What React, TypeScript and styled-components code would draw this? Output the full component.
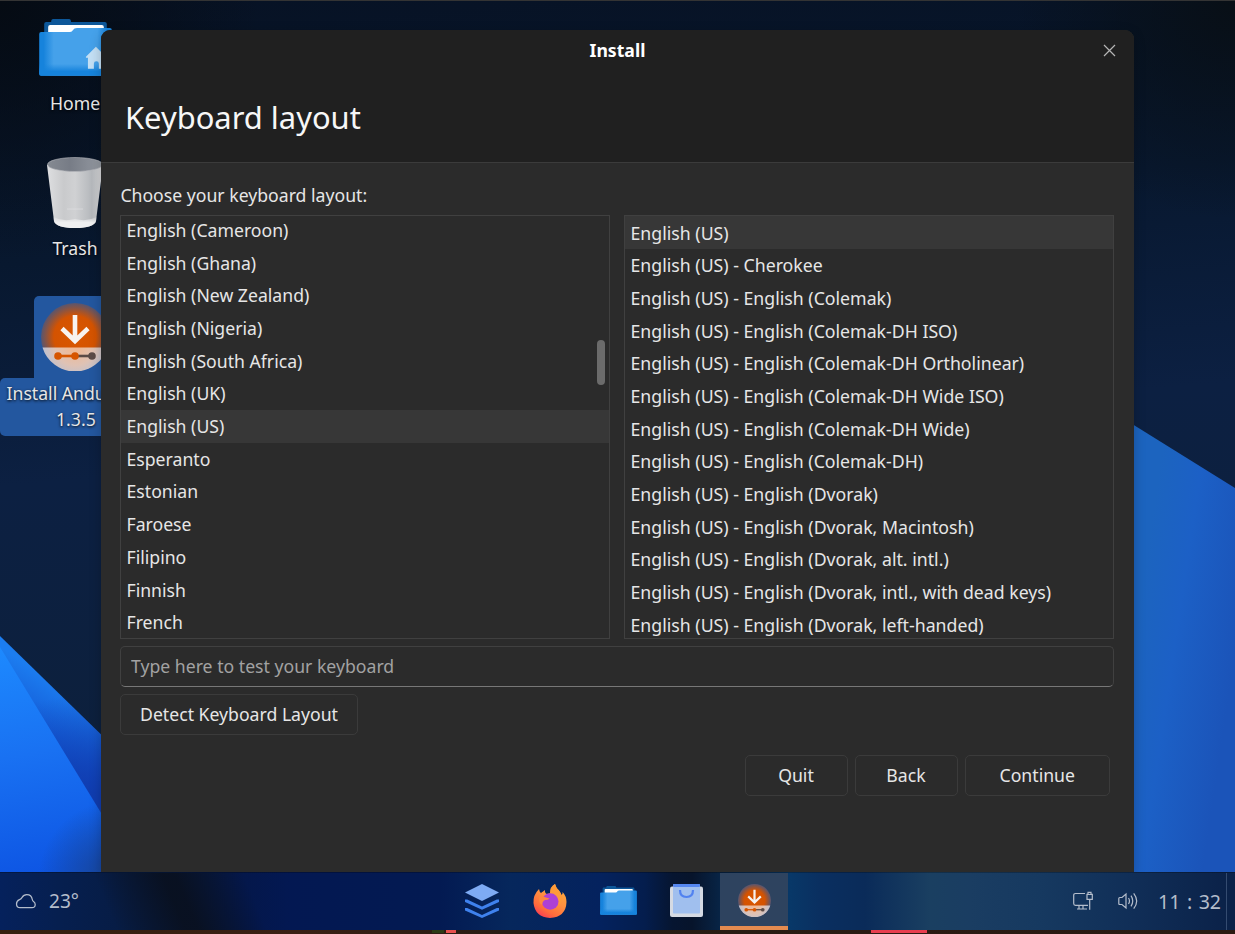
import React from "react";
import styled, { createGlobalStyle, css } from "styled-components";

const GlobalStyle = createGlobalStyle`
  * { box-sizing: border-box; }
  body { margin: 0; background: #081428; }
  body, button, input { font-family: "Noto Sans", "Open Sans", sans-serif; }
`;

const Screen = styled.div`
  display: flex;
  flex-direction: column;
  width: 1235px;
  height: 934px;
  overflow: hidden;
  font-size: 17.65px;
  color: #e6e6e6;
`;

const Desktop = styled.main`
  position: relative;
  flex: 1;
  min-height: 0;
  border-top: 1px solid #343434;
  overflow: hidden;
`;

const Wallpaper = styled.svg`
  position: absolute;
  inset: 0;
  display: block;
`;

const Shortcut = styled.div<{ $top: number }>`
  position: absolute;
  top: ${(p) => p.$top}px;
  left: 0;
  width: 150px;
  display: flex;
  flex-direction: column;
  align-items: center;
`;

const ShortcutIcon = styled.div<{ $selected?: boolean }>`
  width: 82px;
  height: 82px;
  display: flex;
  align-items: center;
  justify-content: center;
  ${(p) => p.$selected && css`
    background: #23579f;
    border-radius: 5px 5px 0 0;
  `}
`;

const ShortcutLabel = styled.div`
  padding: 2px 0 0;
  line-height: 25.5px;
  text-align: center;
  text-shadow: 0 1px 3px #000;
`;

const SelectedLabel = styled.div`
  align-self: flex-start;
  display: flex;
  flex-direction: column;
  align-items: flex-start;
  width: 104px;
  padding: 3px 0 4px;
  background: #23579f;
  border-radius: 5px 0 0 5px;
  line-height: 25.5px;
  text-shadow: 0 1px 3px #000;
  white-space: nowrap;
`;

const LabelLine = styled.span<{ $indent: number }>`
  margin-left: ${(p) => p.$indent}px;
`;

const Window = styled.section`
  position: absolute;
  left: 101px;
  top: 29px;
  width: 1033px;
  height: 843px;
  display: flex;
  flex-direction: column;
  background: #2b2b2b;
  border-radius: 9px 9px 0 0;
  border-bottom: 1px solid #141414;
  box-shadow: 0 3px 12px rgba(0, 0, 0, 0.22);
  overflow: hidden;
`;

const Header = styled.header`
  flex: none;
  height: 133px;
  background: #202020;
  border-bottom: 1px solid #3b3b3b;
`;

const TitleBar = styled.div`
  display: grid;
  grid-template-columns: 49px 1fr 49px;
  align-items: center;
  height: 41px;
`;

const Title = styled.div`
  padding-bottom: 2px;
  text-align: center;
  font-weight: 700;
  color: #fff;
`;

const CloseButton = styled.button`
  display: flex;
  justify-content: center;
  padding: 0;
  border: 0;
  background: none;
`;

const PageHeading = styled.h1`
  margin: 25px 0 0 24px;
  font-size: 30.9px;
  font-weight: 400;
  line-height: 42px;
  color: #f7f7f7;
`;

const Body = styled.div`
  display: flex;
  flex-direction: column;
  padding: 20px 20px 0 19px;
`;

const Prompt = styled.div`
  height: 32px;
  padding-left: 0.4px;
  line-height: 25px;
`;

const Lists = styled.div`
  display: grid;
  grid-template-columns: 490px 490px;
  gap: 14px;
`;

const ListBox = styled.div<{ $scrolled?: boolean }>`
  position: relative;
  height: 424px;
  border: 1px solid #404040;
  overflow: hidden;
  font-size: ${(p) => (p.$scrolled ? "17.65px" : "17.72px")};
  & > ul {
    margin-top: ${(p) => (p.$scrolled ? "-1.9px" : "0.7px")};
    box-shadow: ${(p) => (p.$scrolled ? "none" : "0 -1px #373737")};
  }
`;

const Options = styled.ul`
  list-style: none;
  margin: 0;
  padding: 0;
`;

const Option = styled.li<{ $selected?: boolean }>`
  height: 32.68px;
  padding-left: 5.5px;
  line-height: 32.68px;
  white-space: nowrap;
  background: ${(p) => (p.$selected ? "#373737" : "transparent")};
`;

const ScrollThumb = styled.div`
  position: absolute;
  top: 124px;
  right: 4.5px;
  width: 8px;
  height: 45px;
  border-radius: 4px;
  background: #6b6b6b;
`;

const TestInput = styled.input`
  height: 41px;
  margin-top: 7px;
  padding: 0 10px 2px;
  font-size: 17.65px;
  color: #e6e6e6;
  background: #2b2b2b;
  border: 1px solid #404040;
  border-bottom-color: #777;
  border-radius: 5px;
  outline: none;
  &::placeholder { color: #a2a2a2; opacity: 1; }
`;

const Button = styled.button<{ $width: number }>`
  width: ${(p) => p.$width}px;
  height: 41px;
  padding: 0 0 2px;
  font-size: 17.65px;
  line-height: 24px;
  color: #e6e6e6;
  background: #2b2b2b;
  border: 1px solid #3b3b3b;
  border-radius: 5px;
`;

const DetectRow = styled.div`
  display: flex;
  margin-top: 7px;
`;

const Actions = styled.div`
  display: flex;
  justify-content: flex-end;
  gap: 7px;
  padding: 20px 4px 0 0;
`;

const Taskbar = styled.footer`
  flex: none;
  height: 58px;
  display: grid;
  grid-template-columns: 448px 340px 1fr;
  border-top: 1px solid rgba(0, 0, 0, 0.25);
  color: #b4bdcb;
  background:
    linear-gradient(67deg, rgba(9, 16, 30, 0) 14%, rgba(9, 16, 30, 0.9) 47%, rgba(9, 16, 30, 0.9) 53%, rgba(9, 16, 30, 0) 86%) 88px 0 / 184px 100% no-repeat,
    linear-gradient(
      90deg,
      #05215c 0, #061f4f 60px, #071c44 125px, #071a40 170px,
      #04174a 240px, #031852 290px, #031a52 440px, #06275c 510px, #04225e 600px,
      #041d4d 645px, #061531 672px, #07142b 692px, #082547 722px, #083868 790px,
      #0a2f60 820px, #0a2b59 865px, #1a3f61 930px, #1a3d62 970px, #163960 1040px,
      #102e57 1135px, #0b2249 1225px
    );
`;

const Weather = styled.div`
  display: flex;
  align-items: center;
  gap: 12px;
  padding: 0 0 2px 15px;
  font-size: 19.1px;
`;

const Tasks = styled.nav`
  display: grid;
  grid-template-columns: repeat(5, 68px);
`;

const Task = styled.div<{ $active?: boolean }>`
  display: flex;
  align-items: center;
  justify-content: center;
  border-bottom: 4px solid transparent;
  padding-top: 2px;
  ${(p) => p.$active && css`
    background: #2e435f;
    border-bottom-color: #e58b4f;
  `}
`;

const Tray = styled.div`
  display: flex;
  align-items: center;
  justify-content: flex-end;
`;

const TrayIcon = styled.div<{ $right: number }>`
  display: flex;
  margin-right: ${(p) => p.$right}px;
  padding-bottom: 2px;
`;

const Clock = styled.div`
  width: 64px;
  font-size: 19.6px;
  word-spacing: 1.4px;
  white-space: nowrap;
`;

const ShowDesktop = styled.div`
  width: 9px;
  height: 100%;
  margin-left: 4px;
  border-left: 1px solid #344b70;
`;

const BottomEdge = styled.div`
  flex: none;
  display: flex;
  height: 4px;
  background: linear-gradient(90deg, #36200f, #3a2014 300px, #281c14 500px, #2b1a12);
`;

const EdgeMark = styled.span<{ $gap: number; $width: number; $color: string }>`
  width: ${(p) => p.$width}px;
  height: 3px;
  margin-left: ${(p) => p.$gap}px;
  background: ${(p) => p.$color};
`;

const layouts = [
  "English (Cameroon)", "English (Ghana)", "English (New Zealand)", "English (Nigeria)",
  "English (South Africa)", "English (UK)", "English (US)", "Esperanto", "Estonian",
  "Faroese", "Filipino", "Finnish", "French",
];

const variants = [
  "English (US)",
  "English (US) - Cherokee",
  "English (US) - English (Colemak)",
  "English (US) - English (Colemak-DH ISO)",
  "English (US) - English (Colemak-DH Ortholinear)",
  "English (US) - English (Colemak-DH Wide ISO)",
  "English (US) - English (Colemak-DH Wide)",
  "English (US) - English (Colemak-DH)",
  "English (US) - English (Dvorak)",
  "English (US) - English (Dvorak, Macintosh)",
  "English (US) - English (Dvorak, alt. intl.)",
  "English (US) - English (Dvorak, intl., with dead keys)",
  "English (US) - English (Dvorak, left-handed)",
];

const Background = () => (
  <Wallpaper width="1235" height="871" viewBox="0 1 1235 871">
    <defs>
      <linearGradient id="sky" x1="0" y1="0" x2="0.12" y2="1">
        <stop offset="0" stopColor="#071224" />
        <stop offset="0.3" stopColor="#08182f" />
        <stop offset="0.55" stopColor="#0c2042" />
        <stop offset="1" stopColor="#0d203a" />
      </linearGradient>
      <radialGradient id="cornerL" gradientUnits="userSpaceOnUse" cx="0" cy="0" r="260">
        <stop offset="0" stopColor="#050b13" />
        <stop offset="1" stopColor="#050b13" stopOpacity="0" />
      </radialGradient>
      <radialGradient id="cornerR" gradientUnits="userSpaceOnUse" cx="1235" cy="0" r="220">
        <stop offset="0" stopColor="#080f16" />
        <stop offset="1" stopColor="#080f16" stopOpacity="0" />
      </radialGradient>
      <linearGradient id="bright" gradientUnits="userSpaceOnUse" x1="0" y1="640" x2="40" y2="872">
        <stop offset="0" stopColor="#1d8bff" />
        <stop offset="0.5" stopColor="#1971f2" />
        <stop offset="1" stopColor="#0e56e4" />
      </linearGradient>
      <linearGradient id="fold" gradientUnits="userSpaceOnUse" x1="70" y1="690" x2="30" y2="755">
        <stop offset="0" stopColor="#1c7df0" />
        <stop offset="1" stopColor="#1048c8" />
      </linearGradient>
      <linearGradient id="foldShade" gradientUnits="userSpaceOnUse" x1="65" y1="695" x2="90" y2="800">
        <stop offset="0" stopColor="#103cae" stopOpacity="0" />
        <stop offset="1" stopColor="#103cae" />
      </linearGradient>
      <radialGradient id="floorShade" gradientUnits="userSpaceOnUse" cx="118" cy="880" r="80">
        <stop offset="0" stopColor="#1a3f80" stopOpacity="0.9" />
        <stop offset="1" stopColor="#1a3f80" stopOpacity="0" />
      </radialGradient>
      <linearGradient id="rightBlue" gradientUnits="userSpaceOnUse" x1="1134" y1="640" x2="1235" y2="655">
        <stop offset="0" stopColor="#1c64bf" />
        <stop offset="0.4" stopColor="#1c60c6" />
        <stop offset="1" stopColor="#1b54b9" />
      </linearGradient>
    </defs>
    <rect width="1235" height="872" fill="url(#sky)" />
    <rect width="400" height="400" fill="url(#cornerL)" />
    <rect x="935" width="300" height="300" fill="url(#cornerR)" />
    <path d="M0 636L120 753V872H0Z" fill="url(#fold)" />
    <path d="M0 636L120 753V872H0Z" fill="url(#foldShade)" />
    <path d="M0 647L120 844V872H0Z" fill="url(#bright)" />
    <rect y="780" width="120" height="92" fill="url(#floorShade)" />
    <path d="M1100 404L1235 488V872H1100Z" fill="url(#rightBlue)" />
  </Wallpaper>
);

const FolderIcon = ({ width, home }: { width: number; home?: boolean }) => (
  <svg width={width} height={width * 0.79} viewBox="0 0 73 58">
    <defs>
      <linearGradient id="folderFront" x1="0" y1="0" x2="1" y2="0">
        <stop offset="0" stopColor="#1683dc" />
        <stop offset="0.06" stopColor="#1683dc" />
        <stop offset="0.2" stopColor="#45a1ea" />
        <stop offset="0.8" stopColor="#45a1ea" />
        <stop offset="0.94" stopColor="#1683dc" />
      </linearGradient>
      <linearGradient id="folderFloor" x1="0" y1="0" x2="0" y2="1">
        <stop offset="0.72" stopColor="#1683dc" stopOpacity="0" />
        <stop offset="0.9" stopColor="#1683dc" />
      </linearGradient>
    </defs>
    <path d="M5 5Q5 3 7 3H12Q12 0 14 0H30Q32 0 32 3H66Q68 3 68 5V16H5Z" fill="#0d5799" />
    <path d="M9 8Q9 6 11 6H63Q65 6 65 8V17H9Z" fill="#fff" />
    <path d="M0 15Q0 13 2 13H31Q33 13 34 11Q35 9 38 9H71Q73 9 73 11V55Q73 57 71 57H2Q0 57 0 55Z" fill="url(#folderFront)" />
    <path d="M0 15H73V55Q73 57 71 57H2Q0 57 0 55Z" fill="url(#folderFloor)" />
    {home && <path d="M57 28L67 38V39H65V50H60V45Q60 42.500 57.500 42.500Q55 42.500 55 45V50H49V39H47V38Z" fill="#c3dff4" />}
  </svg>
);

const TrashIcon = () => (
  <svg width="56" height="72" viewBox="0 0 56 72">
    <defs>
      <linearGradient id="can" x1="0" y1="0" x2="1" y2="0">
        <stop offset="0" stopColor="#dedfe1" />
        <stop offset="0.3" stopColor="#c9cacc" />
        <stop offset="0.5" stopColor="#d0d1d3" />
        <stop offset="0.8" stopColor="#b5b8bc" />
        <stop offset="1" stopColor="#dddddf" />
      </linearGradient>
      <linearGradient id="canInside" x1="0" y1="0" x2="1" y2="0">
        <stop offset="0" stopColor="#858a92" />
        <stop offset="0.4" stopColor="#777c86" />
        <stop offset="1" stopColor="#959aa2" />
      </linearGradient>
      <linearGradient id="canFloor" x1="0" y1="0" x2="0" y2="1">
        <stop offset="0" stopColor="#efeff0" stopOpacity="0.2" />
        <stop offset="0.5" stopColor="#efeff0" />
      </linearGradient>
    </defs>
    <path d="M0 8L7 64Q9 71 28 71Q47 71 49 64L56 8Z" fill="url(#can)" />
    <path d="M6.500 60Q16 65 28 62Q40 65 49.500 60L49 64Q47 71 28 71Q9 71 7 64Z" fill="url(#canFloor)" />
    <ellipse cx="28" cy="7.500" rx="27.500" ry="7" fill="url(#canInside)" stroke="#b7b9bd" strokeWidth="0.600" />
    <path d="M20 52H36" stroke="#e2e3e5" strokeWidth="0.600" />
  </svg>
);

const InstallerIcon = ({ size }: { size: number }) => (
  <svg width={size} height={size} viewBox="0 0 68 68">
    <defs>
      <radialGradient id="orange" gradientUnits="userSpaceOnUse" cx="34" cy="34" r="34">
        <stop offset="0" stopColor="#d95600" />
        <stop offset="0.62" stopColor="#d45301" />
        <stop offset="1" stopColor="#58556f" />
      </radialGradient>
      <radialGradient id="pale" gradientUnits="userSpaceOnUse" cx="34" cy="42" r="34">
        <stop offset="0" stopColor="#f5b68b" />
        <stop offset="0.6" stopColor="#dfc2b4" />
        <stop offset="1" stopColor="#b9c1d4" />
      </radialGradient>
    </defs>
    <circle cx="34" cy="34" r="34" fill="url(#orange)" />
    <path d="M1.500 44.500H66.500A34 34 0 0 1 1.500 44.500Z" fill="url(#pale)" />
    <path d="M34 12V38M21 25.500L34 38L47 25.500" fill="none" stroke="#f7f3f0" strokeWidth="4.600" />
    <path d="M17 53H34" stroke="#d65500" strokeWidth="2.600" />
    <path d="M34 53H51" stroke="#5b4b47" strokeWidth="2.600" />
    <circle cx="17" cy="53" r="3.800" fill="#d65500" />
    <circle cx="34" cy="53" r="3.800" fill="#d65500" />
    <circle cx="51" cy="53" r="3.800" fill="#5b4b47" />
  </svg>
);

const LayersIcon = () => (
  <svg width="34" height="34" viewBox="0 0 34 34">
    <path d="M17 0L34 8.500L17 17L0 8.500Z" fill="#7eabf4" />
    <path d="M0 15.500L2.200 15.500L17 22.500L31.800 15.500H34V18L17 25.800L0 18Z" fill="#3f82ee" />
    <path d="M0 24L2.200 24L17 31L31.800 24H34V26.500L17 34L0 26.500Z" fill="#3f82ee" />
  </svg>
);

const FirefoxIcon = () => (
  <svg width="34" height="34" viewBox="0 0 34 34">
    <defs>
      <linearGradient id="fox" x1="0.8" y1="0.1" x2="0.25" y2="1">
        <stop offset="0" stopColor="#ffa83b" />
        <stop offset="0.4" stopColor="#ff9040" />
        <stop offset="0.75" stopColor="#ff6c3c" />
        <stop offset="1" stopColor="#f83a55" />
      </linearGradient>
    </defs>
    <path d="M6 5Q6.500 8 8 9Q10 7.500 12 6Q11.500 9 14 10L18 9Q17 3 22 0Q23 4 26 6.500Q28 9 28.500 11Q30 10 29.500 8Q33.500 12 33.500 18Q33 33 17 34Q2 33 .500 19Q0 11 6 5Z" fill="url(#fox)" />
    <path d="M17 9Q16.500 3 22 0Q23 4 26 6.500Q31 13 27 21Q25 11 17 9Z" fill="#ff9a38" />
    <circle cx="17.200" cy="17.500" r="8.300" fill="#ad40d5" />
    <path d="M6 13Q10 12 13 13.500L16.500 14.500Q15 16 12 16Q9.500 17 9 21Q5 18 6 13Z" fill="#ff873e" />
  </svg>
);

const StoreIcon = () => (
  <svg width="33" height="33" viewBox="0 0 33 33">
    <rect x="3" y="0" width="27" height="6" rx="1" fill="#5587f0" />
    <rect x="0" y="2.500" width="33" height="30.500" rx="2" fill="#d5dae3" />
    <rect x="3" y="1.500" width="27" height="28" rx="1" fill="#a0bfee" />
    <rect x="3" y="0" width="27" height="3" rx="1" fill="#5587f0" />
    <path d="M10 6Q10 13 16.500 13Q23 13 23 6" fill="none" stroke="#5182f0" strokeWidth="2.200" />
  </svg>
);

const CloudIcon = () => (
  <svg width="22" height="18" viewBox="0 0 22 18" fill="none" stroke="#b4bdcb" strokeWidth="1.250">
    <path d="M5 15.700H17Q20.200 15.700 20.200 12.500Q20.200 10.600 18.500 9.500Q17.600 9 17.300 7.500Q16.500 2.600 11.800 2.600Q8.600 2.600 7 5.500Q6.300 7 4.500 7.600Q1.500 8.800 1.500 12Q1.600 15.700 5 15.700Z" />
  </svg>
);

const NetworkIcon = () => (
  <svg width="20" height="20" viewBox="0 0 20 20" fill="none" stroke="#b4bdcb" strokeWidth="1.200">
    <path d="M12 2.500H2.500Q.700 2.500 .700 4.300V12.500Q.700 14.300 2.500 14.300H15M6 14.300V18M10 14.300V18M4 18H14" />
    <path d="M15 1.300H18V3.300H19.300V8.300H14V3.300H15ZM14 3.500H19M16.700 8.300V18.700" />
  </svg>
);

const VolumeIcon = () => (
  <svg width="20" height="18" viewBox="0 0 20 18" fill="none" stroke="#b4bdcb" strokeWidth="1.200">
    <path d="M.800 6.500Q.800 5.500 1.800 5.500H4L8 2V16L4 12.500H1.800Q.800 12.500 .800 11.500ZM10.500 6Q12.500 9 10.500 12M13 3.700Q16.500 9 13 14.300M15.700 1.300Q21.700 9 15.700 16.700" />
  </svg>
);

export default function App() {
  return (
    <>
      <GlobalStyle />
      <Screen>
        <Desktop>
          <Background />
          <Shortcut $top={6}>
            <ShortcutIcon><FolderIcon width={73} home /></ShortcutIcon>
            <ShortcutLabel>Home</ShortcutLabel>
          </Shortcut>
          <Shortcut $top={151}>
            <ShortcutIcon><TrashIcon /></ShortcutIcon>
            <ShortcutLabel>Trash</ShortcutLabel>
          </Shortcut>
          <Shortcut $top={295}>
            <ShortcutIcon $selected><InstallerIcon size={68} /></ShortcutIcon>
            <SelectedLabel>
              <LabelLine $indent={6.5}>Install Andu</LabelLine>
              <LabelLine $indent={56}>1.3.5</LabelLine>
            </SelectedLabel>
          </Shortcut>

          <Window>
            <Header>
              <TitleBar>
                <span />
                <Title>Install</Title>
                <CloseButton aria-label="Close">
                  <svg width="13" height="13" viewBox="0 0 13 13">
                    <path d="M1 1L12 12M12 1L1 12" stroke="#b5b5b5" strokeWidth="1.200" />
                  </svg>
                </CloseButton>
              </TitleBar>
              <PageHeading>Keyboard layout</PageHeading>
            </Header>
            <Body>
              <Prompt>Choose your keyboard layout:</Prompt>
              <Lists>
                <ListBox $scrolled>
                  <Options>
                    {layouts.map((name) => (
                      <Option key={name} $selected={name === "English (US)"}>{name}</Option>
                    ))}
                  </Options>
                  <ScrollThumb />
                </ListBox>
                <ListBox>
                  <Options>
                    {variants.map((name) => (
                      <Option key={name} $selected={name === "English (US)"}>{name}</Option>
                    ))}
                  </Options>
                </ListBox>
              </Lists>
              <TestInput placeholder="Type here to test your keyboard" />
              <DetectRow><Button $width={238}>Detect Keyboard Layout</Button></DetectRow>
              <Actions>
                <Button $width={103}>Quit</Button>
                <Button $width={103}>Back</Button>
                <Button $width={145.5}>Continue</Button>
              </Actions>
            </Body>
          </Window>
        </Desktop>
        <Taskbar>
          <Weather><CloudIcon />23°</Weather>
          <Tasks>
            <Task><LayersIcon /></Task>
            <Task><FirefoxIcon /></Task>
            <Task><FolderIcon width={37} /></Task>
            <Task><StoreIcon /></Task>
            <Task $active><InstallerIcon size={33} /></Task>
          </Tasks>
          <Tray>
            <TrayIcon $right={25}><NetworkIcon /></TrayIcon>
            <TrayIcon $right={20}><VolumeIcon /></TrayIcon>
            <Clock>11 : 32</Clock>
            <ShowDesktop />
          </Tray>
        </Taskbar>
        <BottomEdge>
          <EdgeMark $gap={432} $width={12} $color="#2c3a16" />
          <EdgeMark $gap={2} $width={10} $color="#e8504f" />
          <EdgeMark $gap={415} $width={56} $color="#e83e50" />
        </BottomEdge>
      </Screen>
    </>
  );
}
